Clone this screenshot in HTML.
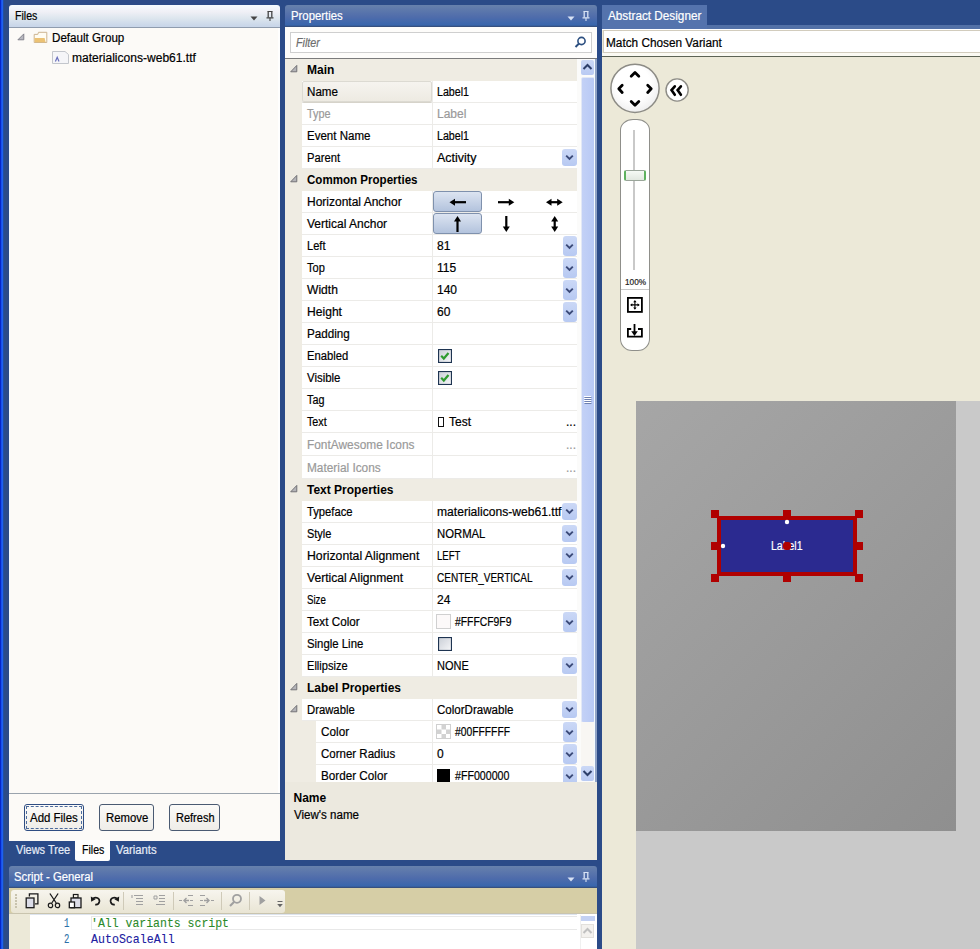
<!DOCTYPE html><html><head><meta charset="utf-8"><style>
*{margin:0;padding:0;box-sizing:border-box}
html,body{width:980px;height:949px;overflow:hidden}
body{position:relative;background:#2b4b88;font-family:"Liberation Sans",sans-serif;font-size:12px;color:#000}
.ab{position:absolute;display:block}
.t{position:absolute;white-space:nowrap;-webkit-text-stroke:0.2px currentColor}
.b{-webkit-text-stroke:0}

</style></head><body>
<div class="ab" style="left:0px;top:0px;width:1px;height:949px;background:#0526c8;"></div>
<div class="ab" style="left:1px;top:0px;width:1px;height:949px;background:#1852ec;"></div>
<div class="ab" style="left:2px;top:0px;width:1px;height:949px;background:#1f60f0;"></div>
<div class="ab" style="left:3px;top:0px;width:1px;height:949px;background:#22509f;"></div>
<div class="ab" style="left:9px;top:5px;width:271px;height:22px;background:linear-gradient(#f4fbff,#f0f0f6 30%,#dde6ee 60%,#c9d6e9 95%);border-radius:3px 3px 0 0"></div>
<div class="ab" style="left:9px;top:27px;width:271px;height:1px;background:#8f9cae;"></div>
<div class="t" style="left:15px;top:9px;font-size:12px;line-height:14px;transform:scaleX(0.8800);transform-origin:0 0;">Files</div>
<svg class="ab" style="left:250px;top:16px;" width="8" height="5" viewBox="0 0 8 5"><path d="M0.5 0.5 H7.5 L4 4.5 Z" fill="#444"/></svg>
<svg class="ab" style="left:266px;top:11px;" width="8" height="10" viewBox="0 0 8 10"><path d="M1.5 0.5 H6.5 M0.5 6.8 H7.5" stroke="#444" stroke-width="1.2" fill="none"/><path d="M2.2 0.5 V6.5 M5.8 0.5 V6.5" stroke="#444" stroke-width="1.3" fill="none"/><path d="M4 6.8 V10" stroke="#444" stroke-width="1.1"/></svg>
<div class="ab" style="left:9px;top:28px;width:271px;height:765px;background:#fcfaf7;"></div>
<div class="ab" style="left:9px;top:28px;width:1px;height:765px;background:#f4faff;"></div>
<div class="ab" style="left:278px;top:28px;width:2px;height:765px;background:#fefefe;"></div>
<svg class="ab" style="left:17px;top:33px;" width="8" height="8" viewBox="0 0 8 8"><path d="M6.8 0.9 V6.8 H0.9 Z" fill="#b8b8c0" stroke="#7a7a86" stroke-width="0.9" stroke-linejoin="round"/></svg>
<svg class="ab" style="left:33px;top:31px;" width="15" height="13" viewBox="0 0 15 13"><path d="M1.2 11.5 V3.4 H4.8 L5.5 1.3 H13.8 V11.5 Z" fill="#fffcf2" stroke="#cdb592" stroke-width="1"/><path d="M1.6 7 H11.6 L12.6 11.2 H1.6 Z" fill="#ecc274"/></svg>
<div class="t" style="left:52px;top:31px;font-size:12px;line-height:14px;transform:scaleX(0.9680);transform-origin:0 0;">Default Group</div>
<svg class="ab" style="left:52px;top:51px;" width="17" height="13" viewBox="0 0 17 13"><path d="M0.5 0.5 H13 L16.5 3.5 V12.5 H0.5 Z" fill="#f5f5f8" stroke="#c3c6cc"/><path d="M3.4 10.5 L5.2 6.2 L7 10.5" stroke="#6a6fbc" stroke-width="1.2" fill="none"/></svg>
<div class="t" style="left:72.4px;top:51px;font-size:12px;line-height:14px;transform:scaleX(1.0040);transform-origin:0 0;">materialicons-web61.ttf</div>
<div class="ab" style="left:9px;top:793px;width:271px;height:1px;background:#9aa3ad;"></div>
<div class="ab" style="left:9px;top:794px;width:271px;height:47px;background:#fcfaf7;"></div>
<div class="ab" style="left:24px;top:804px;width:60px;height:27px;background:linear-gradient(#fbfaf8,#efede8);border:1.4px solid #2f4d82;border-radius:3px"></div>
<div class="ab" style="left:26px;top:806px;width:56px;height:23px;background:transparent;border:1px dashed #4d6b9c"></div>
<div class="t" style="left:30.2px;top:811px;font-size:12px;line-height:14px;transform:scaleX(0.9540);transform-origin:0 0;">Add Files</div>
<div class="ab" style="left:99px;top:804px;width:55px;height:27px;background:linear-gradient(#fbfaf8,#efede8);border:1.4px solid #4a5a72;border-radius:3px"></div>
<div class="t" style="left:105.5px;top:811px;font-size:12px;line-height:14px;transform:scaleX(0.9444);transform-origin:0 0;">Remove</div>
<div class="ab" style="left:169px;top:804px;width:51px;height:27px;background:linear-gradient(#fbfaf8,#efede8);border:1.4px solid #4a5a72;border-radius:3px"></div>
<div class="t" style="left:175.5px;top:811px;font-size:12px;line-height:14px;transform:scaleX(0.9167);transform-origin:0 0;">Refresh</div>
<div class="ab" style="left:75px;top:840px;width:35px;height:21px;background:#fefefd;border-radius:0 0 2px 2px"></div>
<div class="t" style="left:15.5px;top:843px;font-size:12px;line-height:14px;color:#e6ecf7;transform:scaleX(0.9153);transform-origin:0 0;">Views Tree</div>
<div class="t" style="left:81.6px;top:843px;font-size:12px;line-height:14px;transform:scaleX(0.8800);transform-origin:0 0;">Files</div>
<div class="t" style="left:116.2px;top:843px;font-size:12px;line-height:14px;color:#e6ecf7;transform:scaleX(0.9419);transform-origin:0 0;">Variants</div>
<div class="ab" style="left:285px;top:5px;width:312px;height:22px;background:linear-gradient(#6781ac,#4f6cab 55%,#3866ad 92%,#36507f 96%);border-radius:3px 3px 0 0"></div>
<div class="t" style="left:291px;top:9px;font-size:12px;line-height:14px;color:#fff;transform:scaleX(0.9455);transform-origin:0 0;">Properties</div>
<svg class="ab" style="left:567px;top:16px;" width="8" height="5" viewBox="0 0 8 5"><path d="M0.5 0.5 H7.5 L4 4.5 Z" fill="#d8e2f4"/></svg>
<svg class="ab" style="left:582px;top:11px;" width="8" height="10" viewBox="0 0 8 10"><path d="M1.5 0.5 H6.5 M0.5 6.8 H7.5" stroke="#d8e2f4" stroke-width="1.2" fill="none"/><path d="M2.2 0.5 V6.5 M5.8 0.5 V6.5" stroke="#d8e2f4" stroke-width="1.3" fill="none"/><path d="M4 6.8 V10" stroke="#d8e2f4" stroke-width="1.1"/></svg>
<div class="ab" style="left:285px;top:27px;width:312px;height:31px;background:#fdfcfa;"></div>
<div class="ab" style="left:290px;top:32px;width:302px;height:21px;background:#fff;border:1px solid #cfcfcf"></div>
<div class="t" style="left:296px;top:36px;font-size:12px;line-height:14px;color:#6d6d6d;font-style:italic;transform:scaleX(0.8929);transform-origin:0 0;">Filter</div>
<svg class="ab" style="left:574px;top:36px;" width="13" height="13" viewBox="0 0 13 13"><circle cx="7.5" cy="5" r="3.6" stroke="#2c4f80" stroke-width="1.6" fill="none"/><path d="M5 7.5 L1.5 11" stroke="#2c4f80" stroke-width="2"/></svg>
<div class="ab" style="left:285px;top:58px;width:312px;height:1px;background:#7b7b7b;"></div>
<div class="ab" style="left:285px;top:59px;width:292px;height:723px;background:#efece3;"></div>
<div class="ab" style="left:577px;top:59px;width:20px;height:723px;background:#fbfbfa;"></div>
<div class="ab" style="left:285px;top:59px;width:292px;height:723px;overflow:hidden">
<div class="ab" style="left:0px;top:0px;width:292px;height:22px;background:#efece3;"></div>
<svg class="ab" style="left:5px;top:6px;" width="8" height="8" viewBox="0 0 8 8"><path d="M6.8 0.4 V6.8 H0.7 Z" fill="#b4b4b8" stroke="#6a6a6e" stroke-width="0.9" stroke-linejoin="round"/></svg>
<div class="t" style="left:22px;top:4px;font-size:12px;line-height:14px;font-weight:bold;-webkit-text-stroke:0;">Main</div>
<div class="ab" style="left:17px;top:22px;width:275px;height:21px;background:#fff;"></div>
<div class="ab" style="left:17px;top:43px;width:275px;height:1px;background:#ecebe8;"></div>
<div class="ab" style="left:147px;top:22px;width:1px;height:21px;background:#ecebe8;"></div>
<div class="ab" style="left:17px;top:22px;width:130px;height:21px;background:linear-gradient(#f6f4ef,#edeae2);border:1px solid #dcdad2;border-radius:2px;box-shadow:0 1px 0 #d6d3ca"></div>
<div class="t" style="left:22px;top:26px;font-size:12px;line-height:14px;color:#000;transform:scaleX(0.9688);transform-origin:0 0;">Name</div>
<div class="t" style="left:152px;top:26px;font-size:12px;line-height:14px;color:#000;transform:scaleX(0.8889);transform-origin:0 0;">Label1</div>
<div class="ab" style="left:17px;top:44px;width:275px;height:21px;background:#fff;"></div>
<div class="ab" style="left:17px;top:65px;width:275px;height:1px;background:#ecebe8;"></div>
<div class="ab" style="left:147px;top:44px;width:1px;height:21px;background:#ecebe8;"></div>
<div class="t" style="left:22px;top:48px;font-size:12px;line-height:14px;color:#9a9a9a;transform:scaleX(0.9038);transform-origin:0 0;">Type</div>
<div class="t" style="left:152px;top:48px;font-size:12px;line-height:14px;color:#9a9a9a;">Label</div>
<div class="ab" style="left:17px;top:66px;width:275px;height:21px;background:#fff;"></div>
<div class="ab" style="left:17px;top:87px;width:275px;height:1px;background:#ecebe8;"></div>
<div class="ab" style="left:147px;top:66px;width:1px;height:21px;background:#ecebe8;"></div>
<div class="t" style="left:22px;top:70px;font-size:12px;line-height:14px;color:#000;transform:scaleX(0.9606);transform-origin:0 0;">Event Name</div>
<div class="t" style="left:152px;top:70px;font-size:12px;line-height:14px;color:#000;transform:scaleX(0.8889);transform-origin:0 0;">Label1</div>
<div class="ab" style="left:17px;top:88px;width:275px;height:21px;background:#fff;"></div>
<div class="ab" style="left:17px;top:109px;width:275px;height:1px;background:#ecebe8;"></div>
<div class="ab" style="left:147px;top:88px;width:1px;height:21px;background:#ecebe8;"></div>
<div class="t" style="left:22px;top:92px;font-size:12px;line-height:14px;color:#000;transform:scaleX(0.9333);transform-origin:0 0;">Parent</div>
<div class="t" style="left:152px;top:92px;font-size:12px;line-height:14px;color:#000;transform:scaleX(1.0368);transform-origin:0 0;">Activity</div>
<div class="ab" style="left:277px;top:90px;width:15px;height:17px;background:linear-gradient(#cbd8f6,#b7c9f2);border-radius:3px"></div>
<svg class="ab" style="left:280px;top:95px;" width="9" height="7" viewBox="0 0 9 7"><path d="M1.2 1.6 L4.5 4.9 L7.8 1.6" stroke="#3b4a78" stroke-width="1.9" fill="none"/></svg>
<div class="ab" style="left:0px;top:110px;width:292px;height:22px;background:#efece3;"></div>
<svg class="ab" style="left:5px;top:116px;" width="8" height="8" viewBox="0 0 8 8"><path d="M6.8 0.4 V6.8 H0.7 Z" fill="#b4b4b8" stroke="#6a6a6e" stroke-width="0.9" stroke-linejoin="round"/></svg>
<div class="t" style="left:22px;top:114px;font-size:12px;line-height:14px;font-weight:bold;-webkit-text-stroke:0;transform:scaleX(0.9635);transform-origin:0 0;">Common Properties</div>
<div class="ab" style="left:17px;top:132px;width:275px;height:21px;background:#fff;"></div>
<div class="ab" style="left:17px;top:153px;width:275px;height:1px;background:#ecebe8;"></div>
<div class="ab" style="left:147px;top:132px;width:1px;height:21px;background:#ecebe8;"></div>
<div class="t" style="left:22px;top:136px;font-size:12px;line-height:14px;color:#000;">Horizontal Anchor</div>
<div class="ab" style="left:148px;top:132px;width:49px;height:21px;background:linear-gradient(#dce4f1,#b3c3dd);border:1px solid #7f91ad;border-radius:3px"></div>
<div class="ab" style="left:17px;top:154px;width:275px;height:21px;background:#fff;"></div>
<div class="ab" style="left:17px;top:175px;width:275px;height:1px;background:#ecebe8;"></div>
<div class="ab" style="left:147px;top:154px;width:1px;height:21px;background:#ecebe8;"></div>
<div class="t" style="left:22px;top:158px;font-size:12px;line-height:14px;color:#000;">Vertical Anchor</div>
<div class="ab" style="left:148px;top:154px;width:49px;height:21px;background:linear-gradient(#dce4f1,#b3c3dd);border:1px solid #7f91ad;border-radius:3px"></div>
<div class="ab" style="left:17px;top:176px;width:275px;height:21px;background:#fff;"></div>
<div class="ab" style="left:17px;top:197px;width:275px;height:1px;background:#ecebe8;"></div>
<div class="ab" style="left:147px;top:176px;width:1px;height:21px;background:#ecebe8;"></div>
<div class="t" style="left:22px;top:180px;font-size:12px;line-height:14px;color:#000;transform:scaleX(0.9238);transform-origin:0 0;">Left</div>
<div class="t" style="left:152px;top:180px;font-size:12px;line-height:14px;color:#000;">81</div>
<div class="ab" style="left:278px;top:177px;width:14px;height:20px;background:linear-gradient(#cbd8f6,#b7c9f2);border-radius:3px"></div>
<svg class="ab" style="left:280px;top:184px;" width="9" height="7" viewBox="0 0 9 7"><path d="M1.2 1.6 L4.5 4.9 L7.8 1.6" stroke="#3b4a78" stroke-width="1.9" fill="none"/></svg>
<div class="ab" style="left:17px;top:198px;width:275px;height:21px;background:#fff;"></div>
<div class="ab" style="left:17px;top:219px;width:275px;height:1px;background:#ecebe8;"></div>
<div class="ab" style="left:147px;top:198px;width:1px;height:21px;background:#ecebe8;"></div>
<div class="t" style="left:22px;top:202px;font-size:12px;line-height:14px;color:#000;transform:scaleX(0.9200);transform-origin:0 0;">Top</div>
<div class="t" style="left:152px;top:202px;font-size:12px;line-height:14px;color:#000;">115</div>
<div class="ab" style="left:278px;top:199px;width:14px;height:20px;background:linear-gradient(#cbd8f6,#b7c9f2);border-radius:3px"></div>
<svg class="ab" style="left:280px;top:206px;" width="9" height="7" viewBox="0 0 9 7"><path d="M1.2 1.6 L4.5 4.9 L7.8 1.6" stroke="#3b4a78" stroke-width="1.9" fill="none"/></svg>
<div class="ab" style="left:17px;top:220px;width:275px;height:21px;background:#fff;"></div>
<div class="ab" style="left:17px;top:241px;width:275px;height:1px;background:#ecebe8;"></div>
<div class="ab" style="left:147px;top:220px;width:1px;height:21px;background:#ecebe8;"></div>
<div class="t" style="left:22px;top:224px;font-size:12px;line-height:14px;color:#000;transform:scaleX(1.0065);transform-origin:0 0;">Width</div>
<div class="t" style="left:152px;top:224px;font-size:12px;line-height:14px;color:#000;">140</div>
<div class="ab" style="left:278px;top:221px;width:14px;height:20px;background:linear-gradient(#cbd8f6,#b7c9f2);border-radius:3px"></div>
<svg class="ab" style="left:280px;top:228px;" width="9" height="7" viewBox="0 0 9 7"><path d="M1.2 1.6 L4.5 4.9 L7.8 1.6" stroke="#3b4a78" stroke-width="1.9" fill="none"/></svg>
<div class="ab" style="left:17px;top:242px;width:275px;height:21px;background:#fff;"></div>
<div class="ab" style="left:17px;top:263px;width:275px;height:1px;background:#ecebe8;"></div>
<div class="ab" style="left:147px;top:242px;width:1px;height:21px;background:#ecebe8;"></div>
<div class="t" style="left:22px;top:246px;font-size:12px;line-height:14px;color:#000;transform:scaleX(1.0086);transform-origin:0 0;">Height</div>
<div class="t" style="left:152px;top:246px;font-size:12px;line-height:14px;color:#000;">60</div>
<div class="ab" style="left:278px;top:243px;width:14px;height:20px;background:linear-gradient(#cbd8f6,#b7c9f2);border-radius:3px"></div>
<svg class="ab" style="left:280px;top:250px;" width="9" height="7" viewBox="0 0 9 7"><path d="M1.2 1.6 L4.5 4.9 L7.8 1.6" stroke="#3b4a78" stroke-width="1.9" fill="none"/></svg>
<div class="ab" style="left:17px;top:264px;width:275px;height:21px;background:#fff;"></div>
<div class="ab" style="left:17px;top:285px;width:275px;height:1px;background:#ecebe8;"></div>
<div class="ab" style="left:147px;top:264px;width:1px;height:21px;background:#ecebe8;"></div>
<div class="t" style="left:22px;top:268px;font-size:12px;line-height:14px;color:#000;transform:scaleX(0.9727);transform-origin:0 0;">Padding</div>
<div class="ab" style="left:17px;top:286px;width:275px;height:21px;background:#fff;"></div>
<div class="ab" style="left:17px;top:307px;width:275px;height:1px;background:#ecebe8;"></div>
<div class="ab" style="left:147px;top:286px;width:1px;height:21px;background:#ecebe8;"></div>
<div class="t" style="left:22px;top:290px;font-size:12px;line-height:14px;color:#000;transform:scaleX(0.9364);transform-origin:0 0;">Enabled</div>
<svg class="ab" style="left:153px;top:290px;" width="14" height="14" viewBox="0 0 14 14"><rect x="0.5" y="0.5" width="13" height="13" fill="url(#cbg)" stroke="#1e3451" stroke-width="1.2"/><path d="M3.2 6.8 L5.8 9.5 L10.5 4" stroke="#2f9b2f" stroke-width="2.2" fill="none"/></svg>
<div class="ab" style="left:17px;top:308px;width:275px;height:21px;background:#fff;"></div>
<div class="ab" style="left:17px;top:329px;width:275px;height:1px;background:#ecebe8;"></div>
<div class="ab" style="left:147px;top:308px;width:1px;height:21px;background:#ecebe8;"></div>
<div class="t" style="left:22px;top:312px;font-size:12px;line-height:14px;color:#000;transform:scaleX(0.9514);transform-origin:0 0;">Visible</div>
<svg class="ab" style="left:153px;top:312px;" width="14" height="14" viewBox="0 0 14 14"><rect x="0.5" y="0.5" width="13" height="13" fill="url(#cbg)" stroke="#1e3451" stroke-width="1.2"/><path d="M3.2 6.8 L5.8 9.5 L10.5 4" stroke="#2f9b2f" stroke-width="2.2" fill="none"/></svg>
<div class="ab" style="left:17px;top:330px;width:275px;height:21px;background:#fff;"></div>
<div class="ab" style="left:17px;top:351px;width:275px;height:1px;background:#ecebe8;"></div>
<div class="ab" style="left:147px;top:330px;width:1px;height:21px;background:#ecebe8;"></div>
<div class="t" style="left:22px;top:334px;font-size:12px;line-height:14px;color:#000;transform:scaleX(0.9000);transform-origin:0 0;">Tag</div>
<div class="ab" style="left:17px;top:352px;width:275px;height:21px;background:#fff;"></div>
<div class="ab" style="left:17px;top:373px;width:275px;height:1px;background:#ecebe8;"></div>
<div class="ab" style="left:147px;top:352px;width:1px;height:21px;background:#ecebe8;"></div>
<div class="t" style="left:22px;top:356px;font-size:12px;line-height:14px;color:#000;transform:scaleX(0.8957);transform-origin:0 0;">Text</div>
<div class="ab" style="left:153px;top:358px;width:6px;height:10px;background:transparent;border:1.2px solid #111"></div>
<div class="t" style="left:164px;top:356px;font-size:12px;line-height:14px;color:#000;">Test</div>
<div class="t" style="left:281px;top:356px;font-size:12px;line-height:14px;">...</div>
<div class="ab" style="left:17px;top:374px;width:275px;height:22px;background:#fff;"></div>
<div class="ab" style="left:17px;top:396px;width:275px;height:1px;background:#ecebe8;"></div>
<div class="ab" style="left:147px;top:374px;width:1px;height:22px;background:#ecebe8;"></div>
<div class="t" style="left:22px;top:379px;font-size:12px;line-height:14px;color:#9a9a9a;transform:scaleX(0.9907);transform-origin:0 0;">FontAwesome Icons</div>
<div class="t" style="left:281px;top:379px;font-size:12px;line-height:14px;color:#9a9a9a;">...</div>
<div class="ab" style="left:17px;top:397px;width:275px;height:22px;background:#fff;"></div>
<div class="ab" style="left:17px;top:419px;width:275px;height:1px;background:#ecebe8;"></div>
<div class="ab" style="left:147px;top:397px;width:1px;height:22px;background:#ecebe8;"></div>
<div class="t" style="left:22px;top:402px;font-size:12px;line-height:14px;color:#9a9a9a;transform:scaleX(0.9867);transform-origin:0 0;">Material Icons</div>
<div class="t" style="left:281px;top:402px;font-size:12px;line-height:14px;color:#9a9a9a;">...</div>
<div class="ab" style="left:0px;top:420px;width:292px;height:22px;background:#efece3;"></div>
<svg class="ab" style="left:5px;top:426px;" width="8" height="8" viewBox="0 0 8 8"><path d="M6.8 0.4 V6.8 H0.7 Z" fill="#b4b4b8" stroke="#6a6a6e" stroke-width="0.9" stroke-linejoin="round"/></svg>
<div class="t" style="left:22px;top:424px;font-size:12px;line-height:14px;font-weight:bold;-webkit-text-stroke:0;">Text Properties</div>
<div class="ab" style="left:17px;top:442px;width:275px;height:21px;background:#fff;"></div>
<div class="ab" style="left:17px;top:463px;width:275px;height:1px;background:#ecebe8;"></div>
<div class="ab" style="left:147px;top:442px;width:1px;height:21px;background:#ecebe8;"></div>
<div class="t" style="left:22px;top:446px;font-size:12px;line-height:14px;color:#000;transform:scaleX(0.9367);transform-origin:0 0;">Typeface</div>
<div class="t" style="left:152px;top:446px;font-size:12px;line-height:14px;color:#000;transform:scaleX(1.0081);transform-origin:0 0;">materialicons-web61.ttf</div>
<div class="ab" style="left:277px;top:444px;width:15px;height:17px;background:linear-gradient(#cbd8f6,#b7c9f2);border-radius:3px"></div>
<svg class="ab" style="left:280px;top:449px;" width="9" height="7" viewBox="0 0 9 7"><path d="M1.2 1.6 L4.5 4.9 L7.8 1.6" stroke="#3b4a78" stroke-width="1.9" fill="none"/></svg>
<div class="ab" style="left:17px;top:464px;width:275px;height:21px;background:#fff;"></div>
<div class="ab" style="left:17px;top:485px;width:275px;height:1px;background:#ecebe8;"></div>
<div class="ab" style="left:147px;top:464px;width:1px;height:21px;background:#ecebe8;"></div>
<div class="t" style="left:22px;top:468px;font-size:12px;line-height:14px;color:#000;transform:scaleX(0.9148);transform-origin:0 0;">Style</div>
<div class="t" style="left:152px;top:468px;font-size:12px;line-height:14px;color:#000;transform:scaleX(0.9423);transform-origin:0 0;">NORMAL</div>
<div class="ab" style="left:277px;top:466px;width:15px;height:17px;background:linear-gradient(#cbd8f6,#b7c9f2);border-radius:3px"></div>
<svg class="ab" style="left:280px;top:471px;" width="9" height="7" viewBox="0 0 9 7"><path d="M1.2 1.6 L4.5 4.9 L7.8 1.6" stroke="#3b4a78" stroke-width="1.9" fill="none"/></svg>
<div class="ab" style="left:17px;top:486px;width:275px;height:21px;background:#fff;"></div>
<div class="ab" style="left:17px;top:507px;width:275px;height:1px;background:#ecebe8;"></div>
<div class="ab" style="left:147px;top:486px;width:1px;height:21px;background:#ecebe8;"></div>
<div class="t" style="left:22px;top:490px;font-size:12px;line-height:14px;color:#000;transform:scaleX(1.0207);transform-origin:0 0;">Horizontal Alignment</div>
<div class="t" style="left:152px;top:490px;font-size:12px;line-height:14px;color:#000;transform:scaleX(0.8000);transform-origin:0 0;">LEFT</div>
<div class="ab" style="left:277px;top:488px;width:15px;height:17px;background:linear-gradient(#cbd8f6,#b7c9f2);border-radius:3px"></div>
<svg class="ab" style="left:280px;top:493px;" width="9" height="7" viewBox="0 0 9 7"><path d="M1.2 1.6 L4.5 4.9 L7.8 1.6" stroke="#3b4a78" stroke-width="1.9" fill="none"/></svg>
<div class="ab" style="left:17px;top:508px;width:275px;height:21px;background:#fff;"></div>
<div class="ab" style="left:17px;top:529px;width:275px;height:1px;background:#ecebe8;"></div>
<div class="ab" style="left:147px;top:508px;width:1px;height:21px;background:#ecebe8;"></div>
<div class="t" style="left:22px;top:512px;font-size:12px;line-height:14px;color:#000;transform:scaleX(1.0083);transform-origin:0 0;">Vertical Alignment</div>
<div class="t" style="left:152px;top:512px;font-size:12px;line-height:14px;color:#000;transform:scaleX(0.8348);transform-origin:0 0;">CENTER_VERTICAL</div>
<div class="ab" style="left:277px;top:510px;width:15px;height:17px;background:linear-gradient(#cbd8f6,#b7c9f2);border-radius:3px"></div>
<svg class="ab" style="left:280px;top:515px;" width="9" height="7" viewBox="0 0 9 7"><path d="M1.2 1.6 L4.5 4.9 L7.8 1.6" stroke="#3b4a78" stroke-width="1.9" fill="none"/></svg>
<div class="ab" style="left:17px;top:530px;width:275px;height:21px;background:#fff;"></div>
<div class="ab" style="left:17px;top:551px;width:275px;height:1px;background:#ecebe8;"></div>
<div class="ab" style="left:147px;top:530px;width:1px;height:21px;background:#ecebe8;"></div>
<div class="t" style="left:22px;top:534px;font-size:12px;line-height:14px;color:#000;transform:scaleX(0.8083);transform-origin:0 0;">Size</div>
<div class="t" style="left:152px;top:534px;font-size:12px;line-height:14px;color:#000;">24</div>
<div class="ab" style="left:17px;top:552px;width:275px;height:21px;background:#fff;"></div>
<div class="ab" style="left:17px;top:573px;width:275px;height:1px;background:#ecebe8;"></div>
<div class="ab" style="left:147px;top:552px;width:1px;height:21px;background:#ecebe8;"></div>
<div class="t" style="left:22px;top:556px;font-size:12px;line-height:14px;color:#000;transform:scaleX(0.9741);transform-origin:0 0;">Text Color</div>
<div class="ab" style="left:151px;top:555px;width:15px;height:15px;background:#fcf9f9;border:1px solid #d0d0d0"></div>
<div class="t" style="left:170px;top:556px;font-size:12px;line-height:14px;color:#000;transform:scaleX(0.8636);transform-origin:0 0;">#FFFCF9F9</div>
<div class="ab" style="left:278px;top:553px;width:14px;height:20px;background:linear-gradient(#cbd8f6,#b7c9f2);border-radius:3px"></div>
<svg class="ab" style="left:280px;top:560px;" width="9" height="7" viewBox="0 0 9 7"><path d="M1.2 1.6 L4.5 4.9 L7.8 1.6" stroke="#3b4a78" stroke-width="1.9" fill="none"/></svg>
<div class="ab" style="left:17px;top:574px;width:275px;height:21px;background:#fff;"></div>
<div class="ab" style="left:17px;top:595px;width:275px;height:1px;background:#ecebe8;"></div>
<div class="ab" style="left:147px;top:574px;width:1px;height:21px;background:#ecebe8;"></div>
<div class="t" style="left:22px;top:578px;font-size:12px;line-height:14px;color:#000;transform:scaleX(0.9483);transform-origin:0 0;">Single Line</div>
<svg class="ab" style="left:153px;top:578px;" width="14" height="14" viewBox="0 0 14 14"><rect x="0.5" y="0.5" width="13" height="13" fill="url(#cbg)" stroke="#1e3451" stroke-width="1.2"/></svg>
<div class="ab" style="left:17px;top:596px;width:275px;height:21px;background:#fff;"></div>
<div class="ab" style="left:17px;top:617px;width:275px;height:1px;background:#ecebe8;"></div>
<div class="ab" style="left:147px;top:596px;width:1px;height:21px;background:#ecebe8;"></div>
<div class="t" style="left:22px;top:600px;font-size:12px;line-height:14px;color:#000;transform:scaleX(0.9227);transform-origin:0 0;">Ellipsize</div>
<div class="t" style="left:152px;top:600px;font-size:12px;line-height:14px;color:#000;transform:scaleX(0.9143);transform-origin:0 0;">NONE</div>
<div class="ab" style="left:277px;top:598px;width:15px;height:17px;background:linear-gradient(#cbd8f6,#b7c9f2);border-radius:3px"></div>
<svg class="ab" style="left:280px;top:603px;" width="9" height="7" viewBox="0 0 9 7"><path d="M1.2 1.6 L4.5 4.9 L7.8 1.6" stroke="#3b4a78" stroke-width="1.9" fill="none"/></svg>
<div class="ab" style="left:0px;top:618px;width:292px;height:22px;background:#efece3;"></div>
<svg class="ab" style="left:5px;top:624px;" width="8" height="8" viewBox="0 0 8 8"><path d="M6.8 0.4 V6.8 H0.7 Z" fill="#b4b4b8" stroke="#6a6a6e" stroke-width="0.9" stroke-linejoin="round"/></svg>
<div class="t" style="left:22px;top:622px;font-size:12px;line-height:14px;font-weight:bold;-webkit-text-stroke:0;">Label Properties</div>
<div class="ab" style="left:17px;top:640px;width:275px;height:21px;background:#fff;"></div>
<div class="ab" style="left:17px;top:661px;width:275px;height:1px;background:#ecebe8;"></div>
<div class="ab" style="left:147px;top:640px;width:1px;height:21px;background:#ecebe8;"></div>
<div class="t" style="left:22px;top:644px;font-size:12px;line-height:14px;color:#000;transform:scaleX(0.9412);transform-origin:0 0;">Drawable</div>
<svg class="ab" style="left:5px;top:646px;" width="8" height="8" viewBox="0 0 8 8"><path d="M6.8 0.4 V6.8 H0.7 Z" fill="#b4b4b8" stroke="#6a6a6e" stroke-width="0.9" stroke-linejoin="round"/></svg>
<div class="t" style="left:152px;top:644px;font-size:12px;line-height:14px;color:#000;transform:scaleX(0.9625);transform-origin:0 0;">ColorDrawable</div>
<div class="ab" style="left:277px;top:642px;width:15px;height:17px;background:linear-gradient(#cbd8f6,#b7c9f2);border-radius:3px"></div>
<svg class="ab" style="left:280px;top:647px;" width="9" height="7" viewBox="0 0 9 7"><path d="M1.2 1.6 L4.5 4.9 L7.8 1.6" stroke="#3b4a78" stroke-width="1.9" fill="none"/></svg>
<div class="ab" style="left:31px;top:662px;width:261px;height:21px;background:#fff;"></div>
<div class="ab" style="left:31px;top:683px;width:261px;height:1px;background:#ecebe8;"></div>
<div class="ab" style="left:147px;top:662px;width:1px;height:21px;background:#ecebe8;"></div>
<div class="t" style="left:36px;top:666px;font-size:12px;line-height:14px;color:#000;transform:scaleX(0.9793);transform-origin:0 0;">Color</div>
<svg class="ab" style="left:151px;top:665px;" width="15" height="15" viewBox="0 0 15 15"><rect x="0.5" y="0.5" width="14" height="14" fill="#fff" stroke="#d0d0d0"/><rect x="5.5" y="1" width="4.5" height="4.5" fill="#d2d2d2"/><rect x="1" y="5.5" width="4.5" height="4.5" fill="#d2d2d2"/><rect x="10" y="5.5" width="4" height="4.5" fill="#d2d2d2"/><rect x="5.5" y="10" width="4.5" height="4" fill="#d2d2d2"/></svg>
<div class="t" style="left:170px;top:666px;font-size:12px;line-height:14px;color:#000;transform:scaleX(0.8594);transform-origin:0 0;">#00FFFFFF</div>
<div class="ab" style="left:278px;top:663px;width:14px;height:20px;background:linear-gradient(#cbd8f6,#b7c9f2);border-radius:3px"></div>
<svg class="ab" style="left:280px;top:670px;" width="9" height="7" viewBox="0 0 9 7"><path d="M1.2 1.6 L4.5 4.9 L7.8 1.6" stroke="#3b4a78" stroke-width="1.9" fill="none"/></svg>
<div class="ab" style="left:31px;top:684px;width:261px;height:21px;background:#fff;"></div>
<div class="ab" style="left:31px;top:705px;width:261px;height:1px;background:#ecebe8;"></div>
<div class="ab" style="left:147px;top:684px;width:1px;height:21px;background:#ecebe8;"></div>
<div class="t" style="left:36px;top:688px;font-size:12px;line-height:14px;color:#000;transform:scaleX(0.9584);transform-origin:0 0;">Corner Radius</div>
<div class="t" style="left:152px;top:688px;font-size:12px;line-height:14px;color:#000;">0</div>
<div class="ab" style="left:278px;top:685px;width:14px;height:20px;background:linear-gradient(#cbd8f6,#b7c9f2);border-radius:3px"></div>
<svg class="ab" style="left:280px;top:692px;" width="9" height="7" viewBox="0 0 9 7"><path d="M1.2 1.6 L4.5 4.9 L7.8 1.6" stroke="#3b4a78" stroke-width="1.9" fill="none"/></svg>
<div class="ab" style="left:31px;top:706px;width:261px;height:21px;background:#fff;"></div>
<div class="ab" style="left:31px;top:727px;width:261px;height:1px;background:#ecebe8;"></div>
<div class="ab" style="left:147px;top:706px;width:1px;height:21px;background:#ecebe8;"></div>
<div class="t" style="left:36px;top:710px;font-size:12px;line-height:14px;color:#000;transform:scaleX(0.9750);transform-origin:0 0;">Border Color</div>
<div class="ab" style="left:152px;top:710px;width:13px;height:14px;background:#000;"></div>
<div class="t" style="left:170px;top:710px;font-size:12px;line-height:14px;color:#000;transform:scaleX(0.8871);transform-origin:0 0;">#FF000000</div>
<div class="ab" style="left:278px;top:707px;width:14px;height:20px;background:linear-gradient(#cbd8f6,#b7c9f2);border-radius:3px"></div>
<svg class="ab" style="left:280px;top:714px;" width="9" height="7" viewBox="0 0 9 7"><path d="M1.2 1.6 L4.5 4.9 L7.8 1.6" stroke="#3b4a78" stroke-width="1.9" fill="none"/></svg>
</div>
<svg width="0" height="0" style="position:absolute"><defs><linearGradient id="cbg" x1="0" y1="0" x2="1" y2="1"><stop offset="0" stop-color="#c9ced6"/><stop offset="1" stop-color="#f7f7f9"/></linearGradient></defs></svg>
<svg class="ab" style="left:0px;top:0px;pointer-events:none" width="980" height="949" viewBox="0 0 980 949"><rect x="454.0" y="201.1" width="12.0" height="2.2" fill="#000"/><path d="M449.5 202.2 L455.0 198.7 V205.7 Z" fill="#000"/><rect x="498" y="201.1" width="11.799999999999955" height="2.2" fill="#000"/><path d="M514.3 202.2 L508.79999999999995 198.7 V205.7 Z" fill="#000"/><rect x="550.5" y="201.1" width="7.7000000000000455" height="2.2" fill="#000"/><path d="M546 202.2 L551.5 198.7 V205.7 Z" fill="#000"/><path d="M562.7 202.2 L557.2 198.7 V205.7 Z" fill="#000"/><rect x="456.4" y="220.5" width="2.2" height="11.5" fill="#000"/><path d="M457.5 216 L454.0 221.5 H461.0 Z" fill="#000"/><rect x="505.2" y="216" width="2.2" height="11.5" fill="#000"/><path d="M506.3 232 L502.8 226.5 H509.8 Z" fill="#000"/><rect x="553.6" y="220.5" width="2.2" height="7.0" fill="#000"/><path d="M554.7 216 L551.2 221.5 H558.2 Z" fill="#000"/><path d="M554.7 232 L551.2 226.5 H558.2 Z" fill="#000"/></svg>
<div class="ab" style="left:581px;top:60px;width:13px;height:15px;background:linear-gradient(#cbd8f6,#b9caf3);border-radius:2px"></div>
<svg class="ab" style="left:582px;top:63px;" width="11" height="8" viewBox="0 0 11 8"><path d="M1.5 6 L5.5 2 L9.5 6" stroke="#2d3f6a" stroke-width="2" fill="none"/></svg>
<div class="ab" style="left:581px;top:77px;width:14px;height:646px;background:linear-gradient(90deg,#c3d1f6,#b8c9f5);border:1px solid #e2e8f6;border-radius:2px"></div>
<div class="ab" style="left:581px;top:722px;width:14px;height:44px;background:#f8f6f3;"></div>
<svg class="ab" style="left:584px;top:395px;" width="8" height="10" viewBox="0 0 8 10"><rect x="0" y="1" width="7" height="1" fill="#fff"/><rect x="0.5" y="2" width="7" height="1" fill="#6d7fb0"/><rect x="0" y="3" width="7" height="1" fill="#fff"/><rect x="0.5" y="4" width="7" height="1" fill="#6d7fb0"/><rect x="0" y="5" width="7" height="1" fill="#fff"/><rect x="0.5" y="6" width="7" height="1" fill="#6d7fb0"/><rect x="0" y="7" width="7" height="1" fill="#fff"/><rect x="0.5" y="8" width="7" height="1" fill="#6d7fb0"/></svg>
<div class="ab" style="left:594px;top:59px;width:1px;height:723px;background:#f4fbff;"></div>
<div class="ab" style="left:595px;top:59px;width:2px;height:723px;background:#90a3c6;"></div>
<div class="ab" style="left:581px;top:766px;width:13px;height:15px;background:linear-gradient(#cbd8f6,#b9caf3);border-radius:2px"></div>
<svg class="ab" style="left:582px;top:769px;" width="11" height="8" viewBox="0 0 11 8"><path d="M1.5 2 L5.5 6 L9.5 2" stroke="#2d3f6a" stroke-width="2" fill="none"/></svg>
<div class="ab" style="left:285px;top:782px;width:312px;height:78px;background:#ece9df;"></div>
<div class="t" style="left:293.5px;top:791px;font-size:12px;line-height:14px;font-weight:bold;-webkit-text-stroke:0;">Name</div>
<div class="t" style="left:293.5px;top:808px;font-size:12px;line-height:14px;transform:scaleX(0.9632);transform-origin:0 0;">View's name</div>
<div class="ab" style="left:602px;top:5px;width:105px;height:24px;background:#5473ad;"></div>
<div class="ab" style="left:707px;top:25px;width:273px;height:4px;background:#5371a7;"></div>
<div class="t" style="left:608.2px;top:9px;font-size:12px;line-height:14px;color:#fff;transform:scaleX(0.9789);transform-origin:0 0;">Abstract Designer</div>
<div class="ab" style="left:602px;top:29px;width:378px;height:920px;background:#ece9d8;"></div>
<div class="ab" style="left:602px;top:29px;width:378px;height:1px;background:#fff;"></div>
<div class="ab" style="left:603px;top:30px;width:377px;height:23px;background:#fff;border:1px solid #d2ccbd;border-right:none"></div>
<div class="ab" style="left:602px;top:53px;width:378px;height:3px;background:#fbfaf3;"></div>
<div class="ab" style="left:602px;top:56px;width:378px;height:1px;background:#5d6355;"></div>
<div class="t" style="left:605.5px;top:36px;font-size:12px;line-height:14px;transform:scaleX(0.9831);transform-origin:0 0;">Match Chosen Variant</div>
<div class="ab" style="left:636px;top:401px;width:344px;height:548px;background:#c9c9c9;"></div>
<div class="ab" style="left:636px;top:401px;width:320px;height:430px;background:linear-gradient(135deg,#a6a6a6,#8f8f8f);"></div>
<div class="ab" style="left:717px;top:516px;width:140px;height:60px;background:#2b2a90;border:4px solid #b00000"></div>
<div class="t" style="left:770.5px;top:539px;font-size:12px;line-height:14px;color:#fff;transform:scaleX(0.8750);transform-origin:0 0;">Label1</div>
<div class="ab" style="left:711px;top:510px;width:8px;height:8px;background:#b00000;"></div>
<div class="ab" style="left:783px;top:510px;width:8px;height:8px;background:#b00000;"></div>
<div class="ab" style="left:855px;top:510px;width:8px;height:8px;background:#b00000;"></div>
<div class="ab" style="left:711px;top:542px;width:8px;height:8px;background:#b00000;"></div>
<div class="ab" style="left:855px;top:542px;width:8px;height:8px;background:#b00000;"></div>
<div class="ab" style="left:711px;top:574px;width:8px;height:8px;background:#b00000;"></div>
<div class="ab" style="left:783px;top:574px;width:8px;height:8px;background:#b00000;"></div>
<div class="ab" style="left:855px;top:574px;width:8px;height:8px;background:#b00000;"></div>
<div class="ab" style="left:783px;top:542px;width:8px;height:8px;background:#b00000;border-radius:3px"></div>
<svg class="ab" style="left:780px;top:518px;" width="14" height="8" viewBox="0 0 14 8"><circle cx="7" cy="4" r="2.2" fill="#fff"/></svg>
<svg class="ab" style="left:719px;top:542px;" width="8" height="8" viewBox="0 0 8 8"><circle cx="4" cy="4" r="2.2" fill="#fff"/></svg>
<svg class="ab" style="left:608px;top:62px;" width="56" height="56" viewBox="0 0 56 56"><defs><radialGradient id="ng" cx="0.45" cy="0.4" r="0.6"><stop offset="0.6" stop-color="#fff"/><stop offset="1" stop-color="#efefef"/></radialGradient></defs><circle cx="27" cy="26.3" r="24.1" fill="url(#ng)" stroke="#8d8c86" stroke-width="1.5"/><g stroke="#000" stroke-width="2.8" fill="none" stroke-linecap="round" stroke-linejoin="round"><path d="M23.2 14.2 L27 10.4 L30.8 14.2"/><path d="M23.2 39.4 L27 43.2 L30.8 39.4"/><path d="M14.2 23.3 L10.8 26.7 L14.2 30.5"/><path d="M39.7 23.3 L43.2 26.7 L39.7 30.5"/></g></svg>
<svg class="ab" style="left:663px;top:76px;" width="28" height="28" viewBox="0 0 28 28"><circle cx="14.1" cy="14" r="11.1" fill="#fff" stroke="#8d8c86" stroke-width="1.4"/><g stroke="#000" stroke-width="2.6" fill="none" stroke-linecap="round"><path d="M11.8 10.3 L8.5 14.1 L11.8 18.8"/><path d="M17.9 10.3 L14.6 14.1 L17.9 18.8"/></g></svg>
<div class="ab" style="left:620px;top:119px;width:30px;height:232px;background:#fff;border:1.3px solid #8f8f8a;border-radius:13px 13px 12px 12px / 11px 11px 12px 12px"></div>
<div class="ab" style="left:633px;top:130px;width:1.5px;height:140px;background:#c9c9c9;"></div>
<div class="ab" style="left:624px;top:170px;width:22px;height:11px;background:linear-gradient(#f6faf5,#e2e8e0);border:1px solid #9aa59a;border-left:2px solid #5fb25f;border-right:2px solid #5fb25f;border-radius:2px"></div>
<div class="t" style="left:624.8px;top:277px;font-size:9px;line-height:11px;color:#222;transform:scaleX(0.9130);transform-origin:0 0;">100%</div>
<div class="ab" style="left:621px;top:289px;width:28px;height:1px;background:#c8c8c8;"></div>
<svg class="ab" style="left:626px;top:296px;" width="18" height="18" viewBox="0 0 18 18"><rect x="1.9" y="1.9" width="14" height="14" fill="none" stroke="#000" stroke-width="1.8"/><path d="M8.9 5 V12.8 M5 8.9 H12.8" stroke="#000" stroke-width="1.1"/><path d="M8.9 4 L7.2 6.3 H10.6 Z M8.9 13.8 L7.2 11.5 H10.6 Z M4 8.9 L6.3 7.2 V10.6 Z M13.8 8.9 L11.5 7.2 V10.6 Z" fill="#000"/></svg>
<svg class="ab" style="left:626px;top:322px;" width="18" height="18" viewBox="0 0 18 18"><path d="M5.2 7 H1.9 V14.7 H15.9 V7 H12" fill="none" stroke="#000" stroke-width="1.8"/><path d="M8.5 2 V10" stroke="#000" stroke-width="1.8"/><path d="M5.2 9.3 L8.5 14 L11.8 9.3 Z" fill="#000"/></svg>
<div class="ab" style="left:9px;top:866px;width:588px;height:22px;background:linear-gradient(#6781ac,#4f6cab 55%,#3866ad 92%,#36507f 96%);border-radius:3px 3px 0 0"></div>
<div class="t" style="left:14px;top:870px;font-size:12px;line-height:14px;color:#fff;transform:scaleX(0.9405);transform-origin:0 0;">Script - General</div>
<svg class="ab" style="left:567px;top:877px;" width="8" height="5" viewBox="0 0 8 5"><path d="M0.5 0.5 H7.5 L4 4.5 Z" fill="#d8e2f4"/></svg>
<svg class="ab" style="left:582px;top:872px;" width="8" height="10" viewBox="0 0 8 10"><path d="M1.5 0.5 H6.5 M0.5 6.8 H7.5" stroke="#d8e2f4" stroke-width="1.2" fill="none"/><path d="M2.2 0.5 V6.5 M5.8 0.5 V6.5" stroke="#d8e2f4" stroke-width="1.3" fill="none"/><path d="M4 6.8 V10" stroke="#d8e2f4" stroke-width="1.1"/></svg>
<div class="ab" style="left:9px;top:888px;width:588px;height:26px;background:#d6cea6;"></div>
<div class="ab" style="left:11px;top:890px;width:274px;height:23px;background:linear-gradient(#f7f5ee,#e9e5d4);border-radius:3px"></div>
<div class="ab" style="left:9px;top:913px;width:588px;height:1px;background:#c9c4ae;"></div>
<svg class="ab" style="left:14px;top:893px;" width="4" height="16" viewBox="0 0 4 16"><rect x="1" y="1" width="2" height="2" fill="#c8c3ae"/><rect x="1" y="4" width="2" height="2" fill="#c8c3ae"/><rect x="1" y="7" width="2" height="2" fill="#c8c3ae"/><rect x="1" y="10" width="2" height="2" fill="#c8c3ae"/><rect x="1" y="13" width="2" height="2" fill="#c8c3ae"/></svg>
<svg class="ab" style="left:24px;top:893px;" width="15" height="16" viewBox="0 0 15 16"><path d="M5.4 3.5 V0.9 H13.9 V10.8 H11" fill="none" stroke="#1a1a1a" stroke-width="1.3"/><rect x="2.2" y="5" width="7.8" height="9.7" fill="#dcdde8" stroke="#1a1a1a" stroke-width="1.3"/></svg>
<svg class="ab" style="left:47px;top:893px;" width="14" height="16" viewBox="0 0 14 16"><path d="M2.9 0.5 L9.2 10 M11.1 0.5 L4.8 10" stroke="#1a1a1a" stroke-width="1.3" fill="none"/><circle cx="3.5" cy="12.4" r="2.2" fill="none" stroke="#1a1a1a" stroke-width="1.2"/><circle cx="10.5" cy="12.4" r="2.2" fill="none" stroke="#1a1a1a" stroke-width="1.2"/></svg>
<svg class="ab" style="left:68px;top:893px;" width="15" height="16" viewBox="0 0 15 16"><rect x="5.4" y="1.5" width="4.6" height="3.5" fill="none" stroke="#1a1a1a" stroke-width="1.2"/><rect x="3" y="5" width="10" height="9.7" fill="#dcdde8" stroke="#1a1a1a" stroke-width="1.3"/><rect x="1.3" y="9" width="5.2" height="5.7" fill="#fff" stroke="#1a1a1a" stroke-width="1.3"/></svg>
<svg class="ab" style="left:90px;top:895px;" width="12" height="13" viewBox="0 0 12 13"><path d="M2.8 3.6 C6 1.5 9.8 3 9.4 6.4 C9 9 6.8 9.8 5.2 9.6" stroke="#1a1a1a" stroke-width="1.7" fill="none"/><path d="M0.8 1.5 L1.2 6.8 L5.6 4.2 Z" fill="#1a1a1a"/></svg>
<svg class="ab" style="left:108px;top:895px;" width="12" height="13" viewBox="0 0 12 13"><path d="M9.2 3.6 C6 1.5 2.2 3 2.6 6.4 C3 9 5.2 9.8 6.8 9.6" stroke="#1a1a1a" stroke-width="1.7" fill="none"/><path d="M11.2 1.5 L10.8 6.8 L6.4 4.2 Z" fill="#1a1a1a"/></svg>
<div class="ab" style="left:123px;top:892px;width:1px;height:18px;background:#cfcab8;"></div>
<div class="ab" style="left:173px;top:892px;width:1px;height:18px;background:#cfcab8;"></div>
<div class="ab" style="left:221px;top:892px;width:1px;height:18px;background:#cfcab8;"></div>
<div class="ab" style="left:249px;top:892px;width:1px;height:18px;background:#cfcab8;"></div>
<svg class="ab" style="left:131px;top:894px;" width="13" height="13" viewBox="0 0 13 13"><path d="M3 1.5 H12 M5 4.5 H12 M5 7.5 H12 M5 10.5 H12 M1 1 V4" stroke="#a0a0a0" stroke-width="1.1" fill="none"/></svg>
<svg class="ab" style="left:153px;top:894px;" width="13" height="13" viewBox="0 0 13 13"><path d="M6 1.5 H12 M6 4.5 H12 M6 7.5 H12 M3 10.5 H12" stroke="#a0a0a0" stroke-width="1.1" fill="none"/><path d="M1 2 H4 V5 H1 Z" fill="none" stroke="#a0a0a0"/></svg>
<svg class="ab" style="left:178px;top:894px;" width="16" height="13" viewBox="0 0 16 13"><path d="M1 6.5 H4 M10 1.5 H15 M10 11.5 H15 M12 6.5 H15" stroke="#a0a0a0" stroke-width="1.2"/><path d="M6 6.5 H11 M8.5 4 L6 6.5 L8.5 9" stroke="#a0a0a0" stroke-width="1.4" fill="none"/></svg>
<svg class="ab" style="left:199px;top:894px;" width="16" height="13" viewBox="0 0 16 13"><path d="M12 6.5 H15 M1 1.5 H6 M1 11.5 H6 M1 6.5 H4" stroke="#a0a0a0" stroke-width="1.2"/><path d="M5 6.5 H10 M7.5 4 L10 6.5 L7.5 9" stroke="#a0a0a0" stroke-width="1.4" fill="none"/></svg>
<svg class="ab" style="left:228px;top:893px;" width="15" height="15" viewBox="0 0 15 15"><circle cx="9" cy="5.8" r="4" fill="none" stroke="#a0a0a0" stroke-width="1.8"/><path d="M6 9 L2 13" stroke="#a0a0a0" stroke-width="2.2"/></svg>
<svg class="ab" style="left:258px;top:895px;" width="9" height="11" viewBox="0 0 9 11"><path d="M1.5 1 L7.5 5.5 L1.5 10 Z" fill="#a0a0a0"/></svg>
<svg class="ab" style="left:276px;top:901px;" width="8" height="8" viewBox="0 0 8 8"><path d="M1.5 0.5 H6.5" stroke="#666" stroke-width="1"/><path d="M1.2 3 H6.8 L4 6.2 Z" fill="#666"/></svg>
<div class="ab" style="left:9px;top:914px;width:588px;height:35px;background:#fff;"></div>
<div class="ab" style="left:9px;top:914px;width:21px;height:35px;background:#ece9d8;"></div>
<div class="ab" style="left:30px;top:914px;width:547px;height:1px;background:#dde4ee;"></div>
<div class="ab" style="left:91px;top:916px;width:486px;height:14px;background:#fff;border:1px solid #e8e8e8;border-right:none"></div>
<div class="t" style="left:63.5px;top:916px;font-size:13px;line-height:16px;color:#2b6fa8;font-family:'Liberation Mono',monospace;-webkit-text-stroke:0.1px currentColor;transform:scaleX(0.6875);transform-origin:0 0;">1</div>
<div class="t" style="left:63.5px;top:932px;font-size:13px;line-height:16px;color:#2b6fa8;font-family:'Liberation Mono',monospace;-webkit-text-stroke:0.1px currentColor;transform:scaleX(0.6875);transform-origin:0 0;">2</div>
<div class="t" style="left:91px;top:916px;font-size:13px;line-height:16px;color:#2a8a2a;font-family:'Liberation Mono',monospace;-webkit-text-stroke:0.1px currentColor;transform:scaleX(0.8846);transform-origin:0 0;">'All variants script</div>
<div class="t" style="left:91px;top:932px;font-size:13px;line-height:16px;color:#2020a0;font-family:'Liberation Mono',monospace;-webkit-text-stroke:0.1px currentColor;transform:scaleX(0.8936);transform-origin:0 0;">AutoScaleAll</div>
<div class="ab" style="left:580px;top:916px;width:15px;height:5px;background:#c3d1f3;"></div>
<div class="ab" style="left:581px;top:924px;width:13px;height:14px;background:#f3f1ee;border:1px solid #e2e0dc"></div>
<svg class="ab" style="left:582px;top:927px;" width="11" height="8" viewBox="0 0 11 8"><path d="M1.5 6 L5.5 2 L9.5 6" stroke="#c0c0c0" stroke-width="2" fill="none"/></svg>
<div class="ab" style="left:580px;top:915px;width:17px;height:34px;background:transparent;border-left:1px solid #f0f0f0"></div>
</body></html>
